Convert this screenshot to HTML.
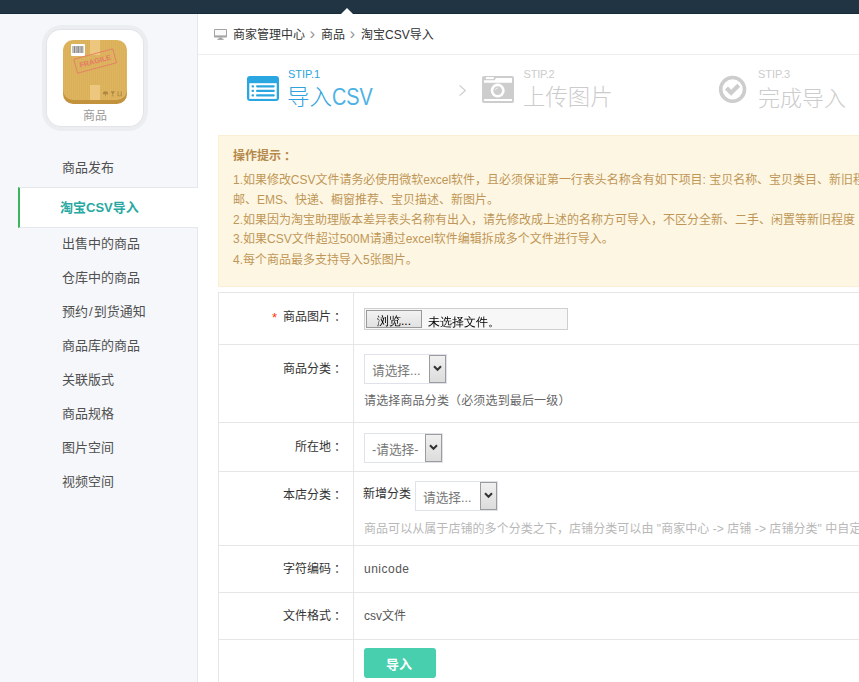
<!DOCTYPE html>
<html lang="zh-CN">
<head>
<meta charset="utf-8">
<title>淘宝CSV导入</title>
<style>
*{box-sizing:border-box;margin:0;padding:0}
html,body{width:859px;height:682px;overflow:hidden}
body{font-family:"Liberation Sans","Noto Sans CJK SC",sans-serif;font-size:12px;color:#333;background:#f5f7fb;position:relative}
.abs{position:absolute;white-space:nowrap}
.topbar{position:absolute;left:0;top:0;width:859px;height:14px;background:#203443;border-bottom:1px solid #172a38}
.tri{position:absolute;left:341px;top:8px;width:0;height:0;border-left:6px solid transparent;border-right:6px solid transparent;border-bottom:6px solid #fff}
.side{position:absolute;left:0;top:14px;width:198px;height:668px;background:#f5f7fb;border-right:1px solid #e4e7ec}
.main{position:absolute;left:198px;top:14px;width:661px;height:668px;background:#fff;overflow:hidden}
.iconbox{position:absolute;left:42px;top:25px;width:106px;height:106px;border-radius:20px;background:#ebedf1}
.iconbox .in{position:absolute;left:5px;top:5px;width:96px;height:96px;border-radius:14px;background:#fff;box-shadow:0 0 0 1px rgba(0,0,0,.035)}
.iconbox .lbl{position:absolute;left:0;width:96px;top:77.5px;text-align:center;font-size:12px;color:#999;line-height:16px}
.box{position:absolute;left:16px;top:10px;width:64px;height:64px}
.nav{position:absolute;left:0;top:151px;width:198px;list-style:none}
.nav li{height:34px;line-height:34px;padding-left:62px;font-size:13px;color:#505050}
.nav li.act{margin:2px 0 -1px 18px;width:180px;height:41px;line-height:39px;padding-left:40px;background:#fff;border-left:2px solid #3bb55d;color:#27a9a1;font-weight:bold;border-top:1px solid #e4e7ec;border-bottom:1px solid #e4e7ec}
.crumb{position:absolute;left:198px;top:14px;width:661px;height:41px;border-bottom:1px solid #eee}
.crumb span{position:absolute;top:1px;line-height:41px;font-size:12px;color:#333;white-space:nowrap}
.crumb .sep{color:#999;font-size:17px;line-height:37px}
.st{font-size:11px;line-height:12px}
.tt{font-size:22px;line-height:26px;font-weight:300}
.blue{color:#2ea3dd}
.gray{color:#ccc}
.tips{position:absolute;left:218px;top:135px;width:700px;height:152px;background:#fdf6e3;border:1px solid #fbeed5;color:#bf9657}
.tips div{position:absolute;left:14px;white-space:nowrap;line-height:20px;font-size:12px}
.tips b{color:#b5894a}
.hl{position:absolute;left:218px;width:641px;height:1px;background:#e6e6e6}
.vl{position:absolute;top:292px;width:1px;height:390px;background:#e6e6e6}
.lab{position:absolute;left:219px;width:124px;text-align:right;line-height:20px;font-size:12px;color:#333;white-space:nowrap}
.lab i{font-style:normal;color:#f30;margin-right:6px;font-size:13px;position:relative;top:1px}
.sel{position:absolute;height:30px;background:#fff;border:1px solid #dfe2ea;font-size:12.7px;color:#777;line-height:32px;padding-left:7px;white-space:nowrap}
.sel .btn{position:absolute;right:0;top:0;width:17px;height:28px;background:linear-gradient(#f0f0f0,#dcdcdc);border:1px solid #9c9c9c}
.sel .btn svg{position:absolute;left:3px;top:9px}
.c{font-family:"Liberation Sans","Noto Sans CJK TC",sans-serif;position:relative;top:1px}
.hint{position:absolute;left:364px;font-size:12px;line-height:20px;white-space:nowrap;letter-spacing:.15px}
</style>
</head>
<body>
<div class="topbar"></div>
<div class="side"></div>
<div class="main"></div>
<div class="tri"></div>

<div class="iconbox"><div class="in">
  <svg class="box" viewBox="0 0 64 64">
    <rect x="0" y="3" width="64" height="61" rx="10" fill="#c3923d"/>
    <rect x="0" y="0" width="64" height="60" rx="10" fill="#deb45f"/>
    <defs><pattern id="st" width="2" height="64" patternUnits="userSpaceOnUse"><rect x="0" y="0" width="1" height="64" fill="#b98a30" opacity=".09"/></pattern><clipPath id="bx"><rect x="0" y="0" width="64" height="60" rx="10"/></clipPath></defs><rect x="0" y="0" width="64" height="60" fill="url(#st)" clip-path="url(#bx)"/><rect x="27" y="0" width="10" height="15" fill="#ecc77d"/>
    <rect x="27" y="45" width="10" height="15" fill="#ecc77d"/>
    <rect x="8" y="4" width="14" height="12" rx="1" fill="#fff"/>
    <g stroke="#555" stroke-width="0.7"><path d="M10 6v7M11.5 6v7M13 6v7M14.2 6v7M15.6 6v7M17 6v7M18.3 6v7M19.8 6v7"/></g>
    <g transform="rotate(-15 32.2 21)" fill="none" stroke="#e67a68"><rect x="12" y="13.8" width="40.3" height="14.4" stroke-width="0.8"/></g>
    <text x="32.2" y="23.7" transform="rotate(-15 32.2 21)" text-anchor="middle" font-family="Liberation Sans, sans-serif" font-weight="bold" font-size="7.4" fill="#e67a68">FRAGILE</text>
    <g fill="#ad8744"><path d="M39.8 54.2a2.7 2.9 0 0 1 5.4 0z"/><path d="M42.2 54h.7v2.3h-.7z"/><path d="M47.7 51.2h4.2l-1.6 2.7h-.2v1.8h1v.6h-2.6v-.6h1v-1.8h-.2z"/><path d="M54.6 51.2h.9v4.2h2.3v-4.2h.9v5.1h-4.1z"/></g>
  </svg>
  <div class="lbl">商品</div></div></div>

<ul class="nav">
  <li>商品发布</li>
  <li class="act">淘宝CSV导入</li>
  <li>出售中的商品</li>
  <li>仓库中的商品</li>
  <li>预约<span style="margin:0 1px">/</span>到货通知</li>
  <li>商品库的商品</li>
  <li>关联版式</li>
  <li>商品规格</li>
  <li>图片空间</li>
  <li>视频空间</li>
</ul>

<div class="crumb">
  <svg style="position:absolute;left:16px;top:15px" width="13" height="11" viewBox="0 0 13 11"><rect x="0" y="0" width="13" height="8.6" rx="0.8" fill="#a3a3a3"/><rect x="1" y="1" width="11" height="5.4" fill="#fbfbfb"/><rect x="4.7" y="8.6" width="3.6" height="1.4" fill="#a3a3a3"/><rect x="3.4" y="9.8" width="6.2" height="1.1" fill="#a3a3a3"/></svg>
  <span style="left:35px">商家管理中心</span>
  <span class="sep" style="left:111.5px">›</span>
  <span style="left:123px">商品</span>
  <span class="sep" style="left:151.5px">›</span>
  <span style="left:163px">淘宝CSV导入</span>
</div>

<!-- steps -->
<svg class="abs" style="left:247px;top:76px" width="32" height="25" viewBox="0 0 32 25"><rect x="0" y="0" width="32" height="25" rx="3" fill="#2aa6e0"/><rect x="2.3" y="7.2" width="27.4" height="15.7" fill="#fff"/><g fill="#2aa6e0"><rect x="4.5" y="9.2" width="2.6" height="2.2" rx="1"/><rect x="4.5" y="13.8" width="2.6" height="2.2" rx="1"/><rect x="4.5" y="18.3" width="2.6" height="2.2" rx="1"/><rect x="9" y="9.2" width="18.8" height="2.2" rx="1.1"/><rect x="9" y="13.8" width="18.8" height="2.2" rx="1.1"/><rect x="9" y="18.3" width="18.8" height="2.2" rx="1.1"/></g></svg>
<div class="abs st blue" style="left:288px;top:68px">STIP.1</div>
<div class="abs tt blue" style="left:287px;top:85px;font-size:22.5px">导入<span style="display:inline-block;transform:scale(.88,1.04);transform-origin:0 78%;color:#4db2e4">CSV</span></div>

<svg class="abs" style="left:458px;top:84px" width="9" height="13" viewBox="0 0 9 13"><path d="M1.6 1.4L7.3 6.5L1.6 11.6" fill="none" stroke="#ccc" stroke-width="1.2"/></svg>
<svg class="abs" style="left:482px;top:76px" width="32" height="27" viewBox="0 0 32 27"><rect x="0" y="0" width="32" height="27" rx="2" fill="#cdcdcd"/><path d="M2 6.8V4.3h10.7L13.9 2H30v4.8z" fill="#fff"/><rect x="3.9" y="1.1" width="7.9" height="2" fill="#fff"/><rect x="2" y="23" width="28" height="2" fill="#fff"/><circle cx="15.7" cy="14.6" r="7" fill="#fff"/><circle cx="15.7" cy="14.6" r="4.4" fill="#cdcdcd"/><path d="M13.4 14.2a2.4 2.4 0 0 1 2.3-2.2" fill="none" stroke="#fff" stroke-width="0.7"/></svg>
<div class="abs st gray" style="left:523.5px;top:68px;letter-spacing:-0.2px">STIP.2</div>
<div class="abs tt gray" style="left:523px;top:85px;font-size:22.4px">上传图片</div>

<svg class="abs" style="left:718px;top:75px" width="29" height="29" viewBox="0 0 29 29"><circle cx="14.6" cy="14.4" r="11.9" fill="none" stroke="#cdcdcd" stroke-width="3.6"/><path d="M8.5 12.9L13.2 17.7L20.7 10.3" fill="none" stroke="#cdcdcd" stroke-width="4.3"/></svg>
<div class="abs st gray" style="left:758px;top:68px">STIP.3</div>
<div class="abs tt gray" style="left:758px;top:85.5px">完成导入</div>

<!-- tips -->
<div class="tips">
  <div style="top:10px"><b>操作提示<span class="c" lang="zh-TW">：</span></b></div>
  <div style="top:34px;letter-spacing:-0.025px">1.如果修改CSV文件请务必使用微软excel软件，且必须保证第一行表头名称含有如下项目: 宝贝名称、宝贝类目、新旧程度、宝贝价格、宝贝数量</div>
  <div style="top:54px">邮、EMS、快递、橱窗推荐、宝贝描述、新图片。</div>
  <div style="top:74px">2.如果因为淘宝助理版本差异表头名称有出入，请先修改成上述的名称方可导入，不区分全新、二手、闲置等新旧程度</div>
  <div style="top:93px">3.如果CSV文件超过500M请通过excel软件编辑拆成多个文件进行导入。</div>
  <div style="top:114px">4.每个商品最多支持导入5张图片。</div>
</div>

<!-- table -->
<div class="hl" style="top:292px"></div>
<div class="hl" style="top:344px"></div>
<div class="hl" style="top:422px"></div>
<div class="hl" style="top:471px"></div>
<div class="hl" style="top:545px"></div>
<div class="hl" style="top:592px"></div>
<div class="hl" style="top:639px"></div>
<div class="vl" style="left:218px"></div>
<div class="vl" style="left:353px"></div>

<div class="lab" style="top:307px"><i>*</i>商品图片<span class="c" lang="zh-TW">：</span></div>
<div class="lab" style="top:359px">商品分类<span class="c" lang="zh-TW">：</span></div>
<div class="lab" style="top:437px">所在地<span class="c" lang="zh-TW">：</span></div>
<div class="lab" style="top:485px">本店分类<span class="c" lang="zh-TW">：</span></div>
<div class="lab" style="top:559px">字符编码<span class="c" lang="zh-TW">：</span></div>
<div class="lab" style="top:606px">文件格式<span class="c" lang="zh-TW">：</span></div>

<!-- file input -->
<div class="abs" style="left:364px;top:308px;width:204px;height:22px;background:#f7f7f7;border:1px solid #cfcfcf">
  <div class="abs" style="left:1px;top:1px;width:56px;height:18px;background:linear-gradient(#f2f2f2,#e2e2e2);border:1px solid #9a9a9a;font-family:'Liberation Sans','WenQuanYi Zen Hei','Noto Sans CJK SC',sans-serif;font-size:12px;line-height:21px;color:#000;text-align:center">浏览...</div>
  <div class="abs" style="left:63px;top:4px;font-family:'Liberation Sans','WenQuanYi Zen Hei','Noto Sans CJK SC',sans-serif;font-size:12px;line-height:18px;color:#000">未选择文件。</div>
</div>

<div class="sel" style="left:364px;top:354px;width:83px">请选择...<div class="btn"><svg width="9" height="7" viewBox="0 0 9 7"><path d="M1 1.2L4.5 4.8L8 1.2" fill="none" stroke="#333" stroke-width="2"/></svg></div></div>
<div class="hint" style="top:391px;color:#666">请选择商品分类（必须选到最后一级）</div>

<div class="sel" style="left:364px;top:433px;width:79px">-请选择-<div class="btn"><svg width="9" height="7" viewBox="0 0 9 7"><path d="M1 1.2L4.5 4.8L8 1.2" fill="none" stroke="#333" stroke-width="2"/></svg></div></div>

<div class="abs" style="left:363px;top:484px;font-size:12px;line-height:20px;color:#333">新增分类</div>
<div class="sel" style="left:415px;top:481px;width:83px">请选择...<div class="btn"><svg width="9" height="7" viewBox="0 0 9 7"><path d="M1 1.2L4.5 4.8L8 1.2" fill="none" stroke="#333" stroke-width="2"/></svg></div></div>
<div class="hint" style="top:519px;color:#b8b8b8;letter-spacing:0.06px">商品可以从属于店铺的多个分类之下，店铺分类可以由 "商家中心 -&gt; 店铺 -&gt; 店铺分类" 中自定义</div>

<div class="abs" style="left:364px;top:559px;font-size:12px;line-height:20px;color:#555;letter-spacing:0.5px">unicode</div>
<div class="abs" style="left:364px;top:606px;font-size:12px;line-height:20px;color:#555">csv文件</div>

<div class="abs" style="left:364px;top:648px;width:72px;height:30px;background:#48cfae;border-radius:3px;color:#fff;font-weight:bold;font-size:13px;line-height:34px;text-align:center;padding-right:2px">导入</div>
</body>
</html>
